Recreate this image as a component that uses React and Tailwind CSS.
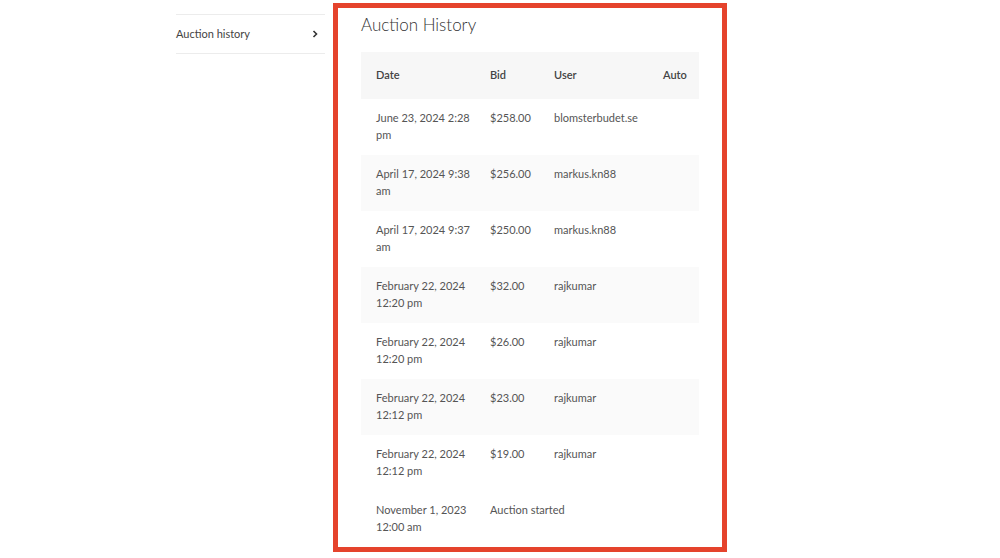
import React from 'react';

const rows = [
  ['June 23, 2024 2:28 pm', '$258.00', 'blomsterbudet.se'],
  ['April 17, 2024 9:38 am', '$256.00', 'markus.kn88'],
  ['April 17, 2024 9:37 am', '$250.00', 'markus.kn88'],
  ['February 22, 2024 12:20 pm', '$32.00', 'rajkumar'],
  ['February 22, 2024 12:20 pm', '$26.00', 'rajkumar'],
  ['February 22, 2024 12:12 pm', '$23.00', 'rajkumar'],
  ['February 22, 2024 12:12 pm', '$19.00', 'rajkumar'],
];

export default function App() {
  return (
    <div className="w-[1000px] h-[558px] overflow-hidden bg-white flex text-[#555]" style={{ fontFamily: 'Lato, "Noto Sans", sans-serif' }}>
      {/* Sidebar */}
      <div className="ml-[176px] mt-[14px] w-[149px]">
        <div className="border-t border-b border-[#ececec] h-[40px] flex items-center justify-between pr-[6px] text-[11px] text-[#444]">
          <span>Auction history</span>
          <svg width="8" height="8" viewBox="0 0 8 8"><path d="M2.5 1 L5.5 4 L2.5 7" stroke="#333" strokeWidth="1.6" fill="none" /></svg>
        </div>
      </div>

      {/* Highlighted panel */}
      <div className="ml-[8px] mt-[3px] w-[394px] h-[549px] border-[5px] border-[#e5432c] overflow-hidden flex flex-col pl-[23px] pr-[23px]">
        <h2 className="text-[17px] font-light text-[#333] mt-[3px] h-[41px] leading-[28px]">Auction History</h2>
        <div className="mt-[3px] text-[11px] text-[#555]">
          <div className="grid grid-cols-[114px_64px_109px_1fr] bg-[#f7f7f7] h-[47px] items-center pl-[15px] font-semibold text-[#444]">
            <div>Date</div><div>Bid</div><div>User</div><div>Auto</div>
          </div>
          {rows.map((r, i) => (
            <div key={i} className={`grid grid-cols-[114px_64px_109px_1fr] h-[56px] pl-[15px] pt-[10px] leading-[17px] ${i % 2 ? 'bg-[#fafafa]' : 'bg-white'}`}>
              <div className="pr-[10px]">{r[0]}</div><div>{r[1]}</div><div>{r[2]}</div><div></div>
            </div>
          ))}
          <div className="grid grid-cols-[114px_1fr] h-[56px] pl-[15px] pt-[10px] leading-[17px] bg-white">
            <div className="pr-[10px]">November 1, 2023 12:00 am</div><div>Auction started</div>
          </div>
        </div>
      </div>
    </div>
  );
}
